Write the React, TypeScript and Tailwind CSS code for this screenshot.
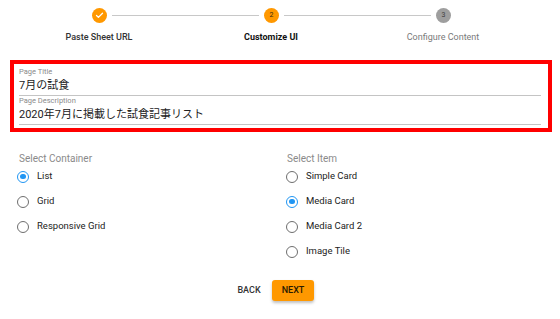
import { Check } from 'lucide-react';

const steps = [
  { label: 'Paste Sheet URL', state: 'done' },
  { label: 'Customize UI', state: 'active' },
  { label: 'Configure Content', state: 'todo' },
];

function StepIcon({ index, state }: { index: number; state: string }) {
  if (state === 'done') {
    return (
      <div className="grid h-[15px] w-[15px] shrink-0 place-items-center rounded-full bg-[#ff9800]">
        <Check className="h-[9px] w-[9px] text-white" strokeWidth={3.5} />
      </div>
    );
  }
  return (
    <div
      className={
        state === 'active'
          ? 'grid h-[15px] w-[15px] shrink-0 place-items-center rounded-full bg-[#ff9800] text-[7px] leading-none text-[#3a2a10]'
          : 'grid h-[15px] w-[15px] shrink-0 place-items-center rounded-full bg-[#9e9e9e] text-[7px] leading-none text-[#3d3d3d]'
      }
    >
      {index + 1}
    </div>
  );
}

function Field({ label, value }: { label: string; value: string }) {
  return (
    <div className="pl-[4px]">
      <div className="text-[7.5px] leading-[9px] text-[#8a8a8a]">{label}</div>
      <div
        className="mt-[3px] text-[11px] leading-[14px] text-[#222]"
        style={{ fontFamily: 'Roboto, "Noto Sans CJK JP", sans-serif' }}
      >
        {value}
      </div>
      <div className="mt-[2px] h-px bg-[#c4c4c4]" />
    </div>
  );
}

function Radio({ label, checked }: { label: string; checked?: boolean }) {
  return (
    <div className="flex h-[25px] items-center gap-[8px]">
      <div
        className={
          checked
            ? 'grid h-[12px] w-[12px] place-items-center rounded-full border-[1.5px] border-[#2196f3]'
            : 'grid h-[12px] w-[12px] place-items-center rounded-full border-[1.5px] border-[#6e6e6e]'
        }
      >
        {checked && <div className="h-[5.5px] w-[5.5px] rounded-full bg-[#2196f3]" />}
      </div>
      <span className="text-[9.5px] text-[#222]">{label}</span>
    </div>
  );
}

export default function App() {
  return (
    <div className="h-[319px] w-[560px] overflow-hidden bg-white font-['Roboto',sans-serif]">
      {/* stepper */}
      <div className="ml-[92px] flex w-[359px] items-center pt-[8px]">
        {steps.map((s, i) => (
          <div key={s.label} className={i === 0 ? 'flex items-center' : 'flex flex-1 items-center'}>
            {i > 0 && <div className="mx-[5px] h-px flex-1 bg-[#c8c8c8]" />}
            <StepIcon index={i} state={s.state} />
          </div>
        ))}
      </div>
      <div className="ml-[13px] mt-[9px] grid w-[516px] grid-cols-3 text-center text-[9px] leading-[11px]">
        {steps.map((s) => (
          <div
            key={s.label}
            className={
              s.state === 'done'
                ? 'font-medium text-[#333]'
                : s.state === 'active'
                ? 'font-bold text-[#111]'
                : 'text-[#7a7a7a]'
            }
          >
            {s.label}
          </div>
        ))}
      </div>

      {/* text fields */}
      <div className="ml-[10px] mt-[17px] w-[542px] border-[4px] border-[#ff0000] pb-[3px] pl-[1px] pr-[7px] pt-[3px]">
        <Field label="Page Title" value="7月の試食" />
        <Field label="Page Description" value="2020年7月に掲載した試食記事リスト" />
      </div>

      {/* selections */}
      <div className="mt-[22px] flex">
        <div className="w-[286px] pl-[17px]">
          <div className="pl-[2px] text-[10px] leading-[10px] text-[#8a8a8a]">Select Container</div>
          <Radio label="List" checked />
          <Radio label="Grid" />
          <Radio label="Responsive Grid" />
        </div>
        <div className="flex-1">
          <div className="pl-[1px] text-[10px] leading-[10px] text-[#8a8a8a]">Select Item</div>
          <Radio label="Simple Card" />
          <Radio label="Media Card" checked />
          <Radio label="Media Card 2" />
          <Radio label="Image Tile" />
        </div>
      </div>

      {/* actions */}
      <div className="ml-[228px] mt-[16px] flex gap-[2px]">
        <button type="button" className="h-[21px] w-[42px] rounded-[3px] text-[9px] font-medium text-[#333]">
          BACK
        </button>
        <button
          type="button"
          className="h-[21px] w-[42px] rounded-[3px] bg-[#ff9800] text-[9px] font-medium text-[#2a1a00] shadow-[0_2px_3px_rgba(0,0,0,0.25)]"
        >
          NEXT
        </button>
      </div>
    </div>
  );
}
